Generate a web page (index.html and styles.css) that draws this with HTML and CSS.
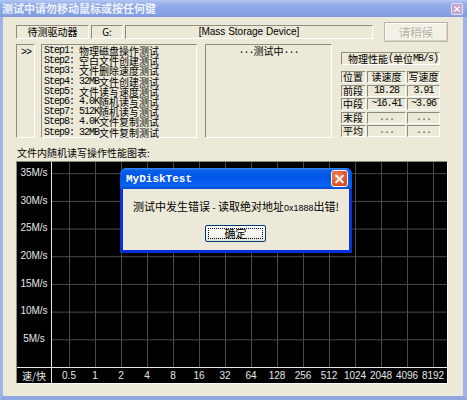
FILE: index.html
```html
<!DOCTYPE html>
<html lang="zh">
<head>
<meta charset="utf-8">
<title>MyDiskTest</title>
<link rel="stylesheet" href="styles.css">
</head>
<body>
<div class="window">
  <div class="titlebar">
    <span class="title">测试中请勿移动鼠标或按任何键</span>
    <span class="tclose"><svg viewBox="0 0 12 12" width="12" height="12"><path d="M3.5 3.5 L8.5 8.5 M8.5 3.5 L3.5 8.5" stroke="#fff" stroke-width="1.6" stroke-linecap="square"/></svg></span>
  </div>
  <div class="frame">
    <div class="row1">
      <div class="sunk drv">待测驱动器</div>
      <div class="sunk letter">G:</div>
      <div class="sunk dev">[Mass Storage Device]</div>
      <div class="wait-btn">请稍候</div>
    </div>
    <div class="row2">
      <div class="sunk arrow"><span class="m">&gt;&gt;</span></div>
      <div class="sunk steps">
        <div class="ln"><span class="m">Step1: </span>物理磁盘操作测试</div>
        <div class="ln"><span class="m">Step2: </span>空白文件创建测试</div>
        <div class="ln"><span class="m">Step3: </span>文件删除速度测试</div>
        <div class="ln"><span class="m">Step4: 32MB</span>文件创建测试</div>
        <div class="ln"><span class="m">Step5: </span>文件读写速度测试</div>
        <div class="ln"><span class="m">Step6: 4.0K</span>随机读写测试</div>
        <div class="ln"><span class="m">Step7: 512K</span>随机读写测试</div>
        <div class="ln"><span class="m">Step8: 4.0K</span>文件复制测试</div>
        <div class="ln"><span class="m">Step9: 32MB</span>文件复制测试</div>
      </div>
      <div class="sunk status"><div class="ln"><span class="m">...</span>测试中<span class="m">...</span></div></div>
      <div class="perf">
        <div class="sunk perf-head"><div class="ln">物理性能<span class="m">(</span>单位<span class="m">MB/s)</span></div></div>
        <div class="perf-table">
          <div class="sunk cell">位置</div><div class="sunk cell">读速度</div><div class="sunk cell">写速度</div>
          <div class="sunk cell">前段</div><div class="sunk cell num"><span class="m">18.28</span></div><div class="sunk cell num"><span class="m">3.91</span></div>
          <div class="sunk cell">中段</div><div class="sunk cell num"><span class="m">~16.41</span></div><div class="sunk cell num"><span class="m">~3.96</span></div>
          <div class="sunk cell">末段</div><div class="sunk cell num dots"><span class="m">...</span></div><div class="sunk cell num dots"><span class="m">...</span></div>
          <div class="sunk cell">平均</div><div class="sunk cell num dots"><span class="m">...</span></div><div class="sunk cell num dots"><span class="m">...</span></div>
        </div>
      </div>
    </div>
    <div class="chart-title">文件内随机读写操作性能图表:</div>
    <div class="chart">
      <div class="yaxis">
        <span>35M/s</span><span>30M/s</span><span>25M/s</span><span>20M/s</span><span>15M/s</span><span>10M/s</span><span>5M/s</span>
      </div>
      <div class="plot"></div>
      <div class="corner">速/快</div>
      <div class="xaxis">
        <span>0.5</span><span>1</span><span>2</span><span>4</span><span>8</span><span>16</span><span>32</span><span>64</span><span>128</span><span>256</span><span>512</span><span>1024</span><span>2048</span><span>4096</span><span>8192</span>
      </div>
    </div>
  </div>

  <div class="dialog">
    <div class="dtitle">
      <span class="dname">MyDiskTest</span>
      <span class="dclose"><svg viewBox="0 0 16 16" width="16" height="16"><path d="M4.5 4.5 L11.5 11.5 M11.5 4.5 L4.5 11.5" stroke="#fff" stroke-width="2" stroke-linecap="square"/></svg></span>
    </div>
    <div class="dbody">
      <div class="dmsg">测试中发生错误 <span class="lat">-</span> 读取绝对地址<span class="lat">0x1888</span>出错!</div>
      <div class="okbtn"><span class="focus">确定</span></div>
    </div>
  </div>
</div>
</body>
</html>
```

FILE: styles.css
```css
* { box-sizing: border-box; }
html, body { margin: 0; padding: 0; }
body {
  width: 467px;
  height: 400px;
  overflow: hidden;
  background: #ece9d8;
  font-family: "Liberation Sans", "Noto Sans CJK SC", sans-serif;
  font-size: 10px;
  color: #000;
}
.window {
  position: relative;
  width: 467px;
  height: 400px;
  display: flex;
  flex-direction: column;
}
.titlebar {
  height: 17px;
  flex: none;
  display: flex;
  align-items: center;
  justify-content: space-between;
  padding: 0 4px 0 2px;
  background: linear-gradient(to bottom, #b4c6f2 0%, #94aeea 25%, #8aa5e6 60%, #829ddf 100%);
}
.title {
  font-family: "Noto Sans CJK SC", sans-serif;
  font-weight: bold;
  font-size: 11px;
  line-height: 17px;
  color: #eef2fc;
}
.tclose {
  width: 12px;
  height: 12px;
  display: flex;
  border: 1px solid #e4e6f6;
  border-radius: 2px;
  background: #c7a3cb;
}
.tclose svg { display: block; width: 10px; height: 10px; }
.frame {
  flex: 1;
  border-left: 3px solid #9fb4e8;
  border-right: 4px solid #9fb4e8;
  border-bottom: 4px solid #8fa6e0;
  padding: 0 15px 0 13px;
  display: flex;
  flex-direction: column;
}
.sunk {
  border-top: 1px solid #8f8c7e;
  border-left: 1px solid #8f8c7e;
  border-right: 1px solid #fff;
  border-bottom: 1px solid #fff;
}
.m {
  font-family: "Liberation Mono", monospace;
  letter-spacing: -1px;
  white-space: pre;
}
.ln {
  height: 10.2px;
  line-height: 10px;
  white-space: pre;
  display: flex;
  align-items: center;
}
.row1 {
  margin-top: 5px;
  height: 20px;
  display: flex;
  align-items: center;
  gap: 2px;
}
.row1 .sunk {
  height: 14px;
  line-height: 12px;
  text-align: center;
  font-family: "Noto Sans CJK SC", sans-serif;
  font-size: 10px;
}
.drv { width: 73px; }
.letter { width: 32px; }
.row1 .dev { width: 248px; font-family: "Liberation Sans", sans-serif; }
.wait-btn {
  margin-left: 9px;
  width: 64px;
  height: 20px;
  border: 1px solid #b9b7ab;
  box-shadow: inset 1px 1px 0 #fff, inset -1px -1px 0 #d8d5c6;
  background: #f3f1e6;
  color: #b2afa0;
  text-shadow: 1px 1px 0 #fff;
  font-family: "Noto Sans CJK SC", sans-serif;
  font-size: 11.5px;
  line-height: 18px;
  text-align: center;
}
.row2 {
  margin-top: 2px;
  height: 94px;
  display: flex;
  font-family: "Noto Sans CJK SC", sans-serif;
  font-size: 10px;
}
.arrow {
  width: 19px;
  padding: 1px 0 0 4px;
  line-height: 10px;
}
.steps {
  margin-left: 6px;
  width: 156px;
  padding: 1px 0 0 2px;
}
.status {
  margin-left: 8px;
  width: 127px;
  padding-top: 1px;
  display: flex;
  flex-direction: column;
  align-items: center;
}
.perf {
  margin-left: 9px;
  width: 99px;
  display: flex;
  flex-direction: column;
}
.perf-head {
  margin-top: 8px;
  height: 13px;
  padding: 1px 0 0 6px;
}
.perf-table {
  margin-top: 6px;
  display: grid;
  grid-template-columns: 25px 39px 33px;
  grid-template-rows: repeat(5, 12px);
  column-gap: 1px;
  row-gap: 1.6px;
}
.cell {
  display: flex;
  align-items: center;
  justify-content: center;
  white-space: nowrap;
  line-height: 10px;
}
.cell:nth-child(3n+1) { justify-content: flex-start; padding-left: 1px; }
.dots { color: #555; }
.chart-title {
  margin-top: 9px;
  line-height: 12px;
  font-family: "Noto Sans CJK SC", sans-serif;
  font-size: 10px;
  padding-left: 1px;
}
.chart {
  margin-top: 2px;
  height: 223px;
  background: #000;
  border-top: 1px solid #8f8c7e;
  border-left: 1px solid #8f8c7e;
  border-right: 1px solid #fff;
  border-bottom: 1px solid #fff;
  display: grid;
  grid-template-columns: 35px 1fr;
  grid-template-rows: 206px 1fr;
  color: #e6e6e6;
  font-family: "Liberation Sans", sans-serif;
  font-size: 10px;
}
.yaxis {
  border-right: 1px solid #e8e8e8;
  border-bottom: 1px solid #e8e8e8;
  display: flex;
  flex-direction: column;
  align-items: center;
  padding-top: 4px;
  gap: 13.7px;
}
.yaxis span { line-height: 14px; height: 14px; }
.plot {
  border-bottom: 1px solid #e8e8e8;
  background-image:
    linear-gradient(to bottom, #4b4b4b 1px, transparent 1px),
    linear-gradient(to right, #4b4b4b 1px, transparent 1px);
  background-size: 100% 27.7px, 26px 100%;
  background-position: 0 100%, 17px 0;
}
.corner {
  border-right: 1px solid #e8e8e8;
  text-align: center;
  line-height: 15px;
  font-family: "Noto Sans CJK SC", sans-serif;
  font-size: 10px;
}
.xaxis {
  display: flex;
  padding-left: 4px;
  line-height: 15px;
}
.xaxis span { width: 26px; flex: none; text-align: center; }

.dialog {
  position: absolute;
  left: 120px;
  top: 168px;
  width: 232px;
  height: 85px;
  background: #0831d9;
  border-radius: 6px 6px 0 0;
  display: flex;
  flex-direction: column;
  padding: 0 3px 3px 3px;
  box-shadow: 1px 1px 2px rgba(0,0,0,0.3);
}
.dtitle {
  height: 21px;
  flex: none;
  margin: 0 -3px;
  padding: 0 4px 0 6px;
  border-radius: 6px 6px 0 0;
  background: linear-gradient(to bottom, #3d8cf5 0%, #0a5fe6 12%, #0056e8 45%, #0a62ef 85%, #0b49d0 100%);
  display: flex;
  align-items: center;
  justify-content: space-between;
}
.dname {
  font-family: "Liberation Mono", monospace;
  font-weight: bold;
  font-size: 11px;
  color: #fff;
}
.dclose {
  width: 17px;
  height: 17px;
  display: flex;
  align-items: center;
  justify-content: center;
  border: 1px solid #fff;
  border-radius: 3px;
  background: radial-gradient(circle at 35% 35%, #f08c6c 0%, #e2582f 55%, #c4401c 100%);
}
.dbody {
  flex: 1;
  background: #ece9d8;
  display: flex;
  flex-direction: column;
  align-items: center;
}
.dmsg {
  margin-top: 11px;
  line-height: 13px;
  font-family: "Noto Sans CJK SC", sans-serif;
  font-size: 11px;
  white-space: nowrap;
}
.lat { font-family: "Liberation Sans", sans-serif; font-size: 9px; }
.okbtn {
  margin-top: 10px;
  margin-left: -1px;
  width: 61px;
  height: 17px;
  border: 1px solid #003c74;
  border-radius: 2px;
  background: linear-gradient(to bottom, #ffffff 0%, #f4f3ee 60%, #e3e1d6 100%);
  padding: 2px;
  display: flex;
}
.focus {
  flex: 1;
  border: 1px dotted #000;
  display: flex;
  align-items: center;
  justify-content: center;
  font-family: "Noto Sans CJK SC", sans-serif;
  font-size: 11px;
  line-height: 1;
}
```
